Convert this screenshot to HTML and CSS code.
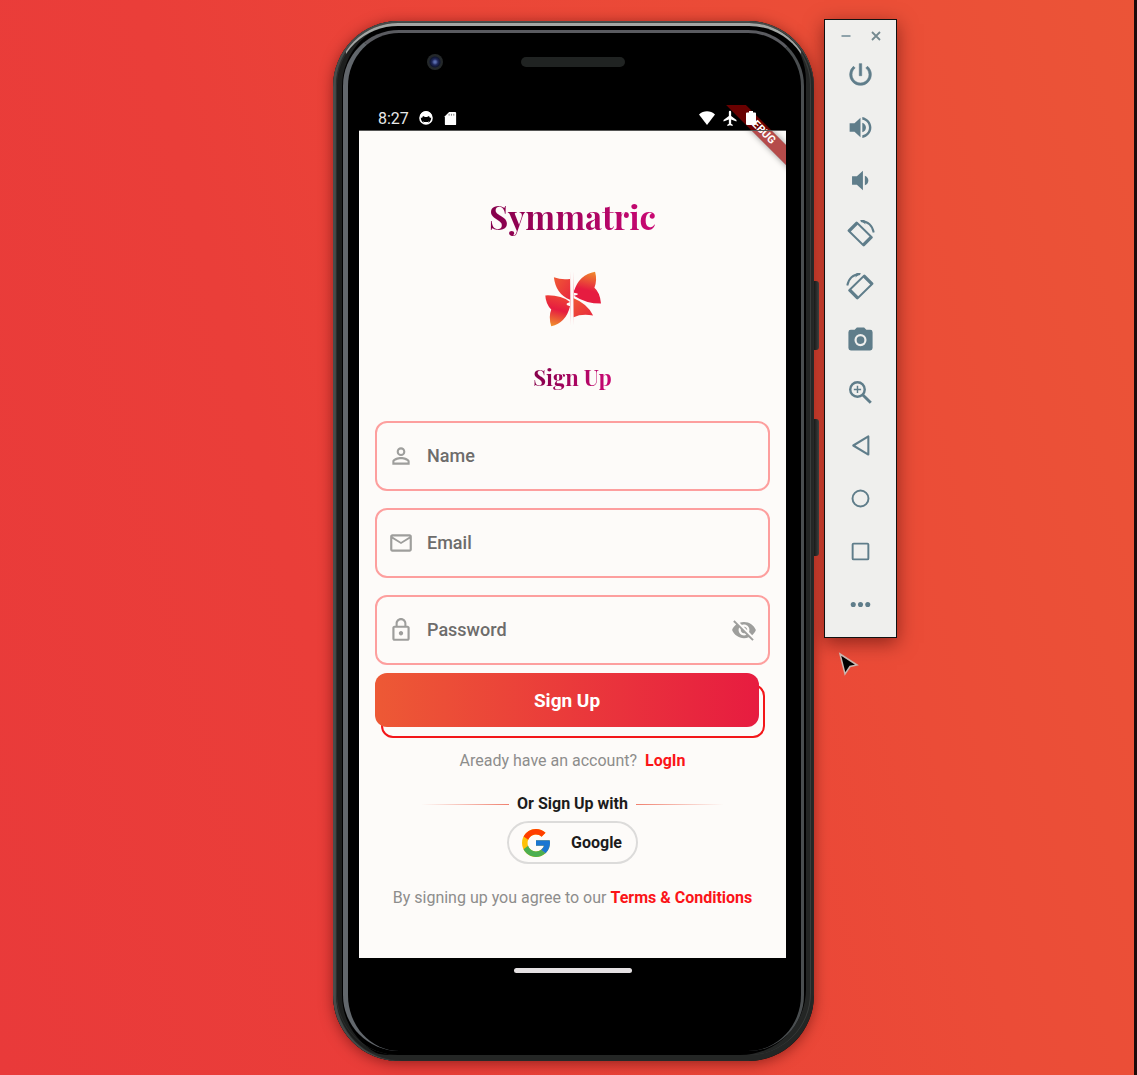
FILE: index.html
```html
<!DOCTYPE html>
<html lang="en">
<head>
<meta charset="utf-8">
<meta name="viewport" content="width=device-width, initial-scale=1">
<title>Symmatric</title>
<link rel="stylesheet" href="styles.css">
</head>
<body>
<div class="desktop">
  <div class="phone">
    <span class="rim"></span>
    <span class="glass-edge"></span>
    <span class="side-key power-key"></span>
    <span class="side-key volume-key"></span>
    <div class="forehead">
      <span class="camera"></span>
      <span class="speaker"></span>
    </div>
    <div class="screen">
      <div class="status-bar">
        <span class="clock">8:27</span>
        <svg class="status-icon" viewBox="0 0 16 16" aria-hidden="true"><circle cx="8" cy="8" r="6" fill="none" stroke="#fff" stroke-width="1.6"/><path d="M2 7a6 6 0 0 1 12 0l-2 1-1-2-2 1H7L5 6 4 8z" fill="#fff"/><path d="M5 11l1 1h4l1-1-1 3H6z" fill="#fff"/></svg>
        <svg class="status-icon sd" viewBox="0 0 16 16" aria-hidden="true"><path d="M6.500 1H13a1 1 0 0 1 1 1v12a1 1 0 0 1-1 1H3a1 1 0 0 1-1-1V5.500z" fill="#fff"/><path d="M6.500 3v2M9 3v2M11.500 3v2" stroke="#777"/></svg>
        <span class="spacer"></span>
        <svg class="status-icon" viewBox="0 0 16 16" aria-hidden="true"><path d="M8 15 0 4.500C4.500.300 11.500.300 16 4.500z" fill="#fff"/></svg>
        <svg class="status-icon" viewBox="1 1 21 21" aria-hidden="true"><path d="M20 16v-2l-7-5V3.500a1.500 1.500 0 0 0-3 0V9l-7 5v2l7-2.500V19l-2 1.500V22l3.500-1 3.500 1v-1.500L13 19v-5.500z" fill="#fff"/></svg>
        <svg class="status-icon battery" viewBox="0 0 12 16" aria-hidden="true"><path d="M4 1h4v1.500h2a1 1 0 0 1 1 1V14a1 1 0 0 1-1 1H2a1 1 0 0 1-1-1V3.500a1 1 0 0 1 1-1h2z" fill="#fff"/></svg>
      </div>
      <main class="app">
        <h1 class="brand">Symmatric</h1>
        <svg class="logo" viewBox="36 30 180 176" aria-hidden="true">
          <defs>
            <linearGradient id="wingUp" x1="0.7" y1="0" x2="0.500" y2="1"><stop offset="0" stop-color="#f08a2c"/><stop offset=".6" stop-color="#e61c40"/><stop offset="1" stop-color="#e61c40"/></linearGradient>
            <linearGradient id="wingDown" x1="0.500" y1="0" x2="0.3" y2="1"><stop offset="0" stop-color="#ee4436"/><stop offset=".45" stop-color="#e61c40"/><stop offset="1" stop-color="#f0922c"/></linearGradient>
            <linearGradient id="wingSmall" x1="0" y1="0" x2="1" y2="1"><stop offset="0" stop-color="#f05a34"/><stop offset="1" stop-color="#e8273e"/></linearGradient>
            <linearGradient id="axis" x1="0" y1="0" x2="0" y2="1"><stop offset="0" stop-color="#e8273e" stop-opacity="0"/><stop offset=".5" stop-color="#e8273e" stop-opacity=".5"/><stop offset="1" stop-color="#e8273e" stop-opacity="0"/></linearGradient>
          </defs>
          <path d="M68 52Q92 61 117 57V120Q74 104 68 52z" fill="url(#wingSmall)"/>
          <path d="M129 94Q145 43 193 35Q200 60 191 84Q208 98 211 132Q165 132 129 108L140 105V101L129 99z" fill="url(#wingUp)"/>
          <path d="M42 107Q90 105 117 127L107 132V136L117 140Q105 190 60 201Q51 172 60 150Q43 132 42 107z" fill="url(#wingDown)"/>
          <path d="M128 116Q170 133 187 168Q152 162 128 173z" fill="url(#wingSmall)"/>
          <path d="M118 34h2v165h-2zM126 34h2v165h-2z" fill="url(#axis)"/>
        </svg>
        <h2 class="heading">Sign Up</h2>
        <form class="form">
          <label class="field">
            <svg class="field-icon" viewBox="0 0 24 24" aria-hidden="true"><path d="M12 5.900a2.100 2.100 0 1 1 0 4.200 2.100 2.100 0 0 1 0-4.200m0 9c2.970 0 6.100 1.460 6.100 2.100v1.100H5.900V17c0-.64 3.130-2.100 6.100-2.100M12 4a4 4 0 1 0 0 8 4 4 0 0 0 0-8zm0 9c-2.670 0-8 1.340-8 4v3h16v-3c0-2.660-5.330-4-8-4z"/></svg>
            <input type="text" placeholder="Name" aria-label="Name">
          </label>
          <label class="field">
            <svg class="field-icon" viewBox="0 0 24 24" aria-hidden="true"><path d="M22 6c0-1.100-.9-2-2-2H4c-1.100 0-2 .9-2 2v12c0 1.100.9 2 2 2h16c1.100 0 2-.9 2-2V6zm-2 0l-8 5-8-5h16zm0 12H4V8l8 5 8-5v10z"/></svg>
            <input type="email" placeholder="Email" aria-label="Email">
          </label>
          <div class="field">
            <svg class="field-icon" viewBox="0 0 24 24" aria-hidden="true"><path d="M12 17c1.100 0 2-.9 2-2s-.9-2-2-2-2 .9-2 2 .9 2 2 2zm6-9h-1V6c0-2.760-2.240-5-5-5S7 3.240 7 6v2H6c-1.100 0-2 .9-2 2v10c0 1.100.9 2 2 2h12c1.100 0 2-.9 2-2V10c0-1.100-.9-2-2-2zM8.900 6c0-1.710 1.390-3.100 3.100-3.100s3.100 1.390 3.100 3.100v2H8.900V6zM18 20H6V10h12v10z"/></svg>
            <input type="password" placeholder="Password" aria-label="Password">
            <button class="reveal" type="button" aria-label="Show password"><svg class="field-icon" viewBox="0 0 24 24" aria-hidden="true"><path d="M12 7c2.760 0 5 2.240 5 5 0 .65-.13 1.260-.36 1.830l2.920 2.920c1.510-1.260 2.700-2.890 3.430-4.750-1.730-4.390-6-7.500-11-7.500-1.400 0-2.740.25-3.980.7l2.160 2.160C10.740 7.130 11.350 7 12 7zM2 4.270l2.280 2.280.46.46C3.080 8.300 1.780 10.020 1 12c1.730 4.390 6 7.500 11 7.500 1.550 0 3.030-.3 4.380-.84l.42.42L19.730 22 21 20.730 3.270 3 2 4.270zM7.530 9.800l1.550 1.550c-.05.21-.08.43-.08.65 0 1.660 1.340 3 3 3 .22 0 .44-.03.65-.08l1.550 1.550c-.67.33-1.410.53-2.200.53-2.760 0-5-2.240-5-5 0-.79.2-1.530.53-2.200zm4.310-.78l3.150 3.150.02-.16c0-1.660-1.340-3-3-3l-.17.01z"/></svg></button>
          </div>
          <div class="submit-wrap"><button class="submit" type="submit">Sign Up</button></div>
        </form>
        <p class="note">Aready have an account? <a class="login" href="#login">LogIn</a></p>
        <div class="divider"><span class="line"></span><span>Or Sign Up with</span><span class="line line-right"></span></div>
        <button class="google" type="button">
          <svg class="google-icon" viewBox="4 4 40 40" aria-hidden="true"><path fill="#FFC107" d="M43.611 20.083H42V20H24v8h11.303c-1.649 4.657-6.080 8-11.303 8-6.627 0-12-5.373-12-12s5.373-12 12-12c3.059 0 5.842 1.154 7.961 3.039l5.657-5.657C34.046 6.053 29.268 4 24 4 12.955 4 4 12.955 4 24s8.955 20 20 20 20-8.955 20-20c0-1.341-.138-2.650-.389-3.917z"/><path fill="#FF3D00" d="M6.306 14.691l6.571 4.819C14.655 15.108 18.961 12 24 12c3.059 0 5.842 1.154 7.961 3.039l5.657-5.657C34.046 6.053 29.268 4 24 4 16.318 4 9.656 8.337 6.306 14.691z"/><path fill="#4CAF50" d="M24 44c5.166 0 9.860-1.977 13.409-5.192l-6.190-5.238C29.211 35.091 26.715 36 24 36c-5.202 0-9.619-3.317-11.283-7.946l-6.522 5.025C9.505 39.556 16.227 44 24 44z"/><path fill="#1976D2" d="M43.611 20.083H42V20H24v8h11.303c-.792 2.237-2.231 4.166-4.087 5.571l6.193 5.237C36.971 39.205 44 34 44 24c0-1.341-.138-2.650-.389-3.917z"/></svg>
          <span>Google</span>
        </button>
        <p class="note terms">By signing up you agree to our <a href="#terms">Terms &amp; Conditions</a></p>
      </main>
      <span class="debug">DEBUG</span>
    </div>
    <div class="chin"><span class="home-bar"></span></div>
  </div>

  <div class="tools" role="toolbar" aria-label="Device controls">
    <div class="window-row">
      <button type="button" aria-label="Minimise"><svg viewBox="0 0 12 12" aria-hidden="true"><path d="M1.500 6h9" stroke="#8fa3ab" stroke-width="2"/></svg></button>
      <button type="button" aria-label="Close"><svg viewBox="0 0 12 12" aria-hidden="true"><path d="M2 2l8 8M10 2l-8 8" stroke="#74898f" stroke-width="1.800"/></svg></button>
    </div>
    <button class="tool" type="button" aria-label="Power"><svg viewBox="0 0 24 24" aria-hidden="true"><path d="M13 3h-2v10h2V3zm4.830 2.170l-1.420 1.420A6.920 6.920 0 0 1 19 12c0 3.870-3.130 7-7 7s-7-3.130-7-7c0-2.190 1.010-4.140 2.580-5.420L6.170 5.170A8.930 8.930 0 0 0 3 12a9 9 0 0 0 18 0c0-2.740-1.230-5.180-3.170-6.830z" stroke="#5f7d8a" stroke-width=".5"/></svg></button>
    <button class="tool" type="button" aria-label="Volume up"><svg viewBox="0 0 24 24" aria-hidden="true"><path d="M3 8.500v7h4l5 4.500V4L7 8.500zM16.500 12c0-1.770-1.020-3.290-3-4.030v8.050c1.980-.73 3-2.250 3-4.020zM13.500 3.230v2.360C17 6.150 19 8.830 19 12s-2 5.850-5.500 6.410v2.360C18 19.860 21 16.280 21 12s-3-7.860-7.500-8.770z"/></svg></button>
    <button class="tool" type="button" aria-label="Volume down"><svg viewBox="0 0 24 24" aria-hidden="true"><path d="M18.500 12c0-1.770-1.020-3.290-2.900-4.030v8.050c1.880-.73 2.900-2.250 2.900-4.020zM5 8.500v7h4l5 4.500V4L9 8.500z"/></svg></button>
    <button class="tool" type="button" aria-label="Rotate left"><svg viewBox="0 0 90 90" aria-hidden="true"><path fill-rule="evenodd" d="M6 33 30 9q3-3 6 0L82 54q3 3 0 6L58 84q-3 3-6 0L6 39q-3-3 0-6zM15 39 36 18 73 54 52 75z"/><path d="M46 6Q80 8 86 42" fill="none" stroke="#5f7d8a" stroke-width="6"/><path d="M43 3h14l4 14z"/></svg></button>
    <button class="tool" type="button" aria-label="Rotate right"><svg viewBox="0 0 90 90" aria-hidden="true"><g transform="translate(90 0) scale(-1 1)"><path fill-rule="evenodd" d="M6 33 30 9q3-3 6 0L82 54q3 3 0 6L58 84q-3 3-6 0L6 39q-3-3 0-6zM15 39 36 18 73 54 52 75z"/><path d="M46 6Q80 8 86 42" fill="none" stroke="#5f7d8a" stroke-width="6"/><path d="M43 3h14l4 14z"/></g></svg></button>
    <button class="tool" type="button" aria-label="Take screenshot"><svg viewBox="0 0 24 24" aria-hidden="true"><path fill-rule="evenodd" d="M9 2 7.170 4H4a2 2 0 0 0-2 2v13a2 2 0 0 0 2 2h16a2 2 0 0 0 2-2V6a2 2 0 0 0-2-2h-3.170L15 2zm3 5.500a5 5 0 1 1 0 10 5 5 0 0 1 0-10zm0 1.800a3.200 3.200 0 1 0 0 6.400 3.200 3.200 0 0 0 0-6.400z"/></svg></button>
    <button class="tool" type="button" aria-label="Zoom"><svg viewBox="0 0 24 24" aria-hidden="true"><g fill="none" stroke="#5f7d8a"><circle cx="9.500" cy="9.500" r="6" stroke-width="2"/><path d="M14 14l6.500 6.500" stroke-width="2.400"/><path d="M9.500 6.500v6M6.500 9.500h6" stroke-width="1.200"/></g></svg></button>
    <button class="tool" type="button" aria-label="Back"><svg viewBox="0 0 24 24" aria-hidden="true"><path d="M18.500 4.500v15L6 12z" fill="none" stroke="#5f7d8a" stroke-width="1.700" stroke-linejoin="round"/></svg></button>
    <button class="tool" type="button" aria-label="Home"><svg viewBox="0 0 24 24" aria-hidden="true"><circle cx="12" cy="12" r="6.600" fill="none" stroke="#5f7d8a" stroke-width="1.600"/></svg></button>
    <button class="tool" type="button" aria-label="Overview"><svg viewBox="0 0 24 24" aria-hidden="true"><rect x="5.500" y="5.500" width="13" height="13" rx=".8" fill="none" stroke="#5f7d8a" stroke-width="1.600"/></svg></button>
    <button class="tool" type="button" aria-label="More"><svg viewBox="0 0 24 24" aria-hidden="true"><circle cx="6" cy="12" r="2.100"/><circle cx="12" cy="12" r="2.100"/><circle cx="18" cy="12" r="2.100"/></svg></button>
  </div>
  <svg class="pointer" viewBox="0 0 22 28" aria-hidden="true"><path d="M2 3 19 14 12 15.500 7 23z" fill="#000" stroke="#c9b5ae" stroke-width="1.500"/></svg>
</div>
</body>
</html>
```
FILE: styles.css
```css
* { box-sizing: border-box; }

body {
  margin: 0;
  font-family: Roboto, "Liberation Sans", sans-serif;
  font-size: 16px;
}

button {
  margin: 0;
  padding: 0;
  border: 0;
  background: none;
  font-family: inherit;
  color: inherit;
  cursor: pointer;
}

svg { display: block; }
a { color: #fb1418; font-weight: 700; text-decoration: none; }

.desktop {
  position: relative;
  display: grid;
  grid-template-columns: 1fr 481px 1fr;
  align-items: start;
  min-height: 100vh;
  padding: 19px 0 14px 13px;
  border-right: 3px solid #1c0a0a;
  background: linear-gradient(75deg, #e93a3a 0%, #ea3e39 30%, #eb4c37 72%, #eb5437 100%);
}

/* Device frame */
.phone {
  position: relative;
  grid-column: 2;
  padding: 0 28px 0 26px;
  border-radius: 66px;
  margin-top: 2px;
  background: #000;
  box-shadow: 0 2px 14px rgba(60, 0, 0, .5), inset 3px 0 1px #484b4a, inset 0 2px 1px #4b4e4c, inset -8px -6px 0 #242625, inset 9px 0 0 #1d1f1e;
}

.rim,
.glass-edge {
  position: absolute;
  border-style: solid;
  pointer-events: none;
}

.rim {
  inset: 2px 3px 6px 3px;
  border-width: 3px 1px 0 1px;
  border-color: #a3a6a4 #3a3d3c transparent #2c2e2d;
  border-radius: 62px;
}

.glass-edge {
  inset: 9px 10px 10px 10px;
  border-width: 3px 3px 0 5px;
  border-color: #5a5b60 #4a4e50 transparent #62676c;
  border-radius: 56px;
}

.side-key {
  position: absolute;
  right: -5px;
  width: 5px;
  border-radius: 0 3px 3px 0;
  background: linear-gradient(90deg, #181a19, #3d3e3d);
}

.power-key { top: 260px; height: 69px; }
.volume-key { top: 398px; height: 137px; }

.forehead {
  display: grid;
  grid-template-columns: 1fr 104px 1fr;
  align-items: center;
  height: 84px;
  padding-bottom: 3px;
}

.camera {
  width: 16px;
  height: 16px;
  margin-left: 68px;
  border-radius: 50%;
  background: radial-gradient(circle, #5a6cae 0 1px, #20285a 3px, #101632 5px, #24282a 6px 8px);
}

.speaker {
  height: 10px;
  border-radius: 5px;
  background: #202322;
}

.screen {
  position: relative;
  overflow: hidden;
}

.status-bar {
  position: relative;
  z-index: 1;
  display: flex;
  align-items: center;
  gap: 7px;
  height: 26px;
  padding: 1px 29px 0 19px;
  border-bottom: 1px solid #555;
  color: #e8e8e8;
}

.clock { font-size: 16px; margin-right: 2px; }
.status-icon { width: 16px; height: 16px; }
.sd { margin-left: 2px; width: 15px; height: 15px; }
.battery { width: 12px; }
.spacer { flex: 1; }

.app {
  display: flex;
  flex-direction: column;
  align-items: center;
  min-height: 827px;
  padding: 63px 16px 48px;
  background: #fdfbf9;
  color: #1c1c1c;
}

.brand,
.heading {
  margin: 0;
  font-family: "Playfair Display", "Liberation Serif", serif;
  font-weight: 700;
  color: transparent;
  background: linear-gradient(90deg, #85004b, #c90873);
  background-clip: text;
  -webkit-background-clip: text;
}

.brand { font-size: 33px; line-height: 44px; }
.heading { margin-top: 33px; font-size: 22px; line-height: 32px; }
.logo { width: 60px; height: 58px; margin-top: 32px; }

.form {
  display: flex;
  flex-direction: column;
  gap: 17px;
  align-self: stretch;
  margin-top: 28px;
}

.field {
  display: flex;
  align-items: center;
  gap: 13px;
  height: 70px;
  padding: 0 11px;
  border: 2px solid #fd9f9e;
  border-radius: 12px;
}

.field-icon { width: 26px; height: 26px; fill: #9e9e9c; }

.field input {
  flex: 1;
  min-width: 0;
  padding: 0;
  border: 0;
  outline: 0;
  background: none;
  font: 500 18px/24px Roboto, "Liberation Sans", sans-serif;
  color: #333;
}

.field input::placeholder { color: #6d6c6b; opacity: 1; }

.submit-wrap {
  position: relative;
  margin: -9px 11px 0 0;
  z-index: 0;
}

.submit-wrap::before {
  content: "";
  position: absolute;
  inset: 11px -6px -11px 6px;
  z-index: -1;
  border: 2px solid #f3171a;
  border-radius: 12px;
}

.submit {
  display: block;
  width: 100%;
  height: 54px;
  border-radius: 12px;
  background: linear-gradient(90deg, #ed5935, #e71c40);
  color: #fff;
  font-size: 19px;
  font-weight: 700;
}

.note {
  margin: 24px 0 0;
  line-height: 20px;
  color: #8d8d8c;
}

.login { margin-left: 4px; }

.divider {
  display: flex;
  align-items: center;
  gap: 8px;
  margin-top: 23px;
  line-height: 20px;
  font-weight: 700;
}

.line {
  width: 88px;
  height: 1px;
  background: linear-gradient(90deg, rgba(240, 90, 70, 0), #f0806e);
}

.line-right { background: linear-gradient(270deg, rgba(240, 90, 70, 0), #f0806e); }

.google {
  display: flex;
  align-items: center;
  justify-content: space-between;
  width: 131px;
  height: 43px;
  margin-top: 7px;
  padding: 0 14px 0 13px;
  border: 2px solid #dcdbda;
  border-radius: 22px;
  font-size: 16px;
  font-weight: 700;
}

.google-icon { width: 28px; height: 28px; }

/* Corner ribbon lying over the app, below the status icons */
.debug {
  position: absolute;
  top: 18px;
  right: -40px;
  width: 130px;
  height: 14px;
  transform: rotate(45deg);
  background: rgba(149, 0, 0, .7);
  box-shadow: 0 0 6px rgba(0, 0, 0, .4);
  color: #fff;
  font-size: 11px;
  font-weight: 700;
  line-height: 14px;
  text-align: center;
}

.chin {
  display: flex;
  justify-content: center;
  height: 103px;
  padding-top: 10px;
}

.home-bar {
  width: 118px;
  height: 5px;
  border-radius: 3px;
  background: #e4e0e2;
}

/* Emulator controls */
.tools {
  display: flex;
  flex-direction: column;
  grid-column: 3;
  width: 73px;
  margin-left: 10px;
  padding-bottom: 6px;
  border: 1px solid #111;
  background: #efefed;
  box-shadow: 0 5px 18px rgba(50, 0, 0, .5);
}

.window-row {
  display: flex;
  align-items: center;
  justify-content: center;
  gap: 18px;
  height: 28px;
  padding-top: 4px;
}

.window-row svg { width: 12px; height: 12px; }

.tool {
  display: grid;
  place-items: center;
  height: 53px;
}

.tool svg { width: 29px; height: 29px; fill: #5f7d8a; }

.pointer {
  position: absolute;
  left: 838px;
  top: 651px;
  width: 22px;
  height: 28px;
}
```
